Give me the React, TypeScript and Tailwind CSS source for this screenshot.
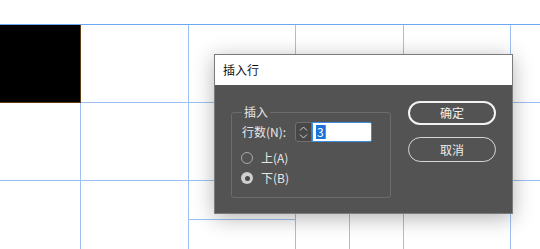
import React from "react";

const font = { fontFamily: '"Noto Sans CJK SC", "Noto Sans", sans-serif' };

function Radio({ checked, label }: { checked?: boolean; label: string }) {
  return (
    <div className="flex items-center h-[20px] pl-[9px]">
      {checked ? (
        <span className="w-[12px] h-[12px] rounded-full bg-[#cfcfcf] flex items-center justify-center">
          <span className="w-[5px] h-[5px] rounded-full bg-[#4a4a4a]" />
        </span>
      ) : (
        <span className="w-[12px] h-[12px] rounded-full border-[1.5px] border-[#a9a9a9]" />
      )}
      <span className="ml-[8px] text-[12px] leading-[20px] text-[#e6e6e6]">{label}</span>
    </div>
  );
}

const cell = "border-r border-b border-[#9dc1f2]";

export default function App() {
  return (
    <div className="relative w-[540px] h-[249px] bg-white overflow-hidden" style={font}>
      {/* table grid */}
      <div className="mt-[24px] w-[580px] h-[260px] border-t border-[#6fa6f2] grid grid-cols-[81px_108px_107px_54px_54px_107px_1fr] grid-rows-[78px_78px_39px_1fr]">
        <div className="bg-black border-r border-b border-[#5e3c14]" />
        <div className={cell} />
        <div className={cell} />
        <div className={`${cell} col-span-2`} />
        <div className={cell} />
        <div className={cell} />

        <div className={cell} />
        <div className={cell} />
        <div className={cell} />
        <div className={`${cell} col-span-2`} />
        <div className={cell} />
        <div className={cell} />

        <div className={`${cell} row-span-2`} />
        <div className={`${cell} row-span-2`} />
        <div className={cell} />
        <div className={`${cell} row-span-2`} />
        <div className={`${cell} row-span-2`} />
        <div className={`${cell} row-span-2`} />
        <div className={`${cell} row-span-2`} />
        <div className={cell} />
      </div>

      {/* dialog */}
      <div className="absolute left-[214px] top-[54px] w-[299px] h-[160px] border border-[#7b7b7b] bg-[#535353] shadow-[0_4px_20px_rgba(0,0,0,0.3)] flex flex-col">
        <div className="h-[30px] bg-white flex items-center pl-[8px] text-[12px] text-[#111]">插入行</div>
        <div className="flex-1 flex pl-[16px] pt-[16px]">
          <div className="relative mt-[11px] w-[160px] h-[86px] border border-[#6c6c6c] rounded-[3px] pt-[9px]">
            <span className="absolute left-[10px] top-[-9px] px-[2px] bg-[#535353] text-[12px] leading-[16px] text-[#e6e6e6]">插入</span>
            <div className="flex items-center h-[20px] pl-[10px]">
              <span className="w-[53px] text-[12px] leading-[20px] text-[#e6e6e6]">行数(N):</span>
              <div className="w-[17px] h-[20px] bg-[#474747] border border-[#707070] rounded-l-[3px] flex flex-col items-center justify-center gap-[3px]">
                <svg width="9" height="5" viewBox="0 0 9 5"><path d="M1 4.5 L4.5 1 L8 4.5" fill="none" stroke="#cfcfcf" strokeWidth="1" /></svg>
                <svg width="9" height="5" viewBox="0 0 9 5"><path d="M1 0.5 L4.5 4 L8 0.5" fill="none" stroke="#cfcfcf" strokeWidth="1" /></svg>
              </div>
              <div className="w-[60px] h-[20px] bg-white border border-[#3c8de0] rounded-r-[2px] flex items-center pl-[3px]">
                <span className="bg-[#1a73d6] text-white text-[12px] leading-[14px] px-[1px]">3</span>
                <span className="w-[1px] h-[14px] bg-[#e0701e]" />
              </div>
            </div>
            <div className="mt-[6px]">
              <Radio label="上(A)" />
              <Radio checked label="下(B)" />
            </div>
          </div>
          <div className="ml-[17px] w-[88px] flex flex-col">
            <button className="h-[24px] rounded-full border-2 border-[#f2f2f2] text-[12px] text-[#f2f2f2] flex items-center justify-center">确定</button>
            <button className="mt-[12px] h-[25px] rounded-full border border-[#d6d6d6] text-[12px] text-[#ececec] flex items-center justify-center">取消</button>
          </div>
        </div>
      </div>
    </div>
  );
}
